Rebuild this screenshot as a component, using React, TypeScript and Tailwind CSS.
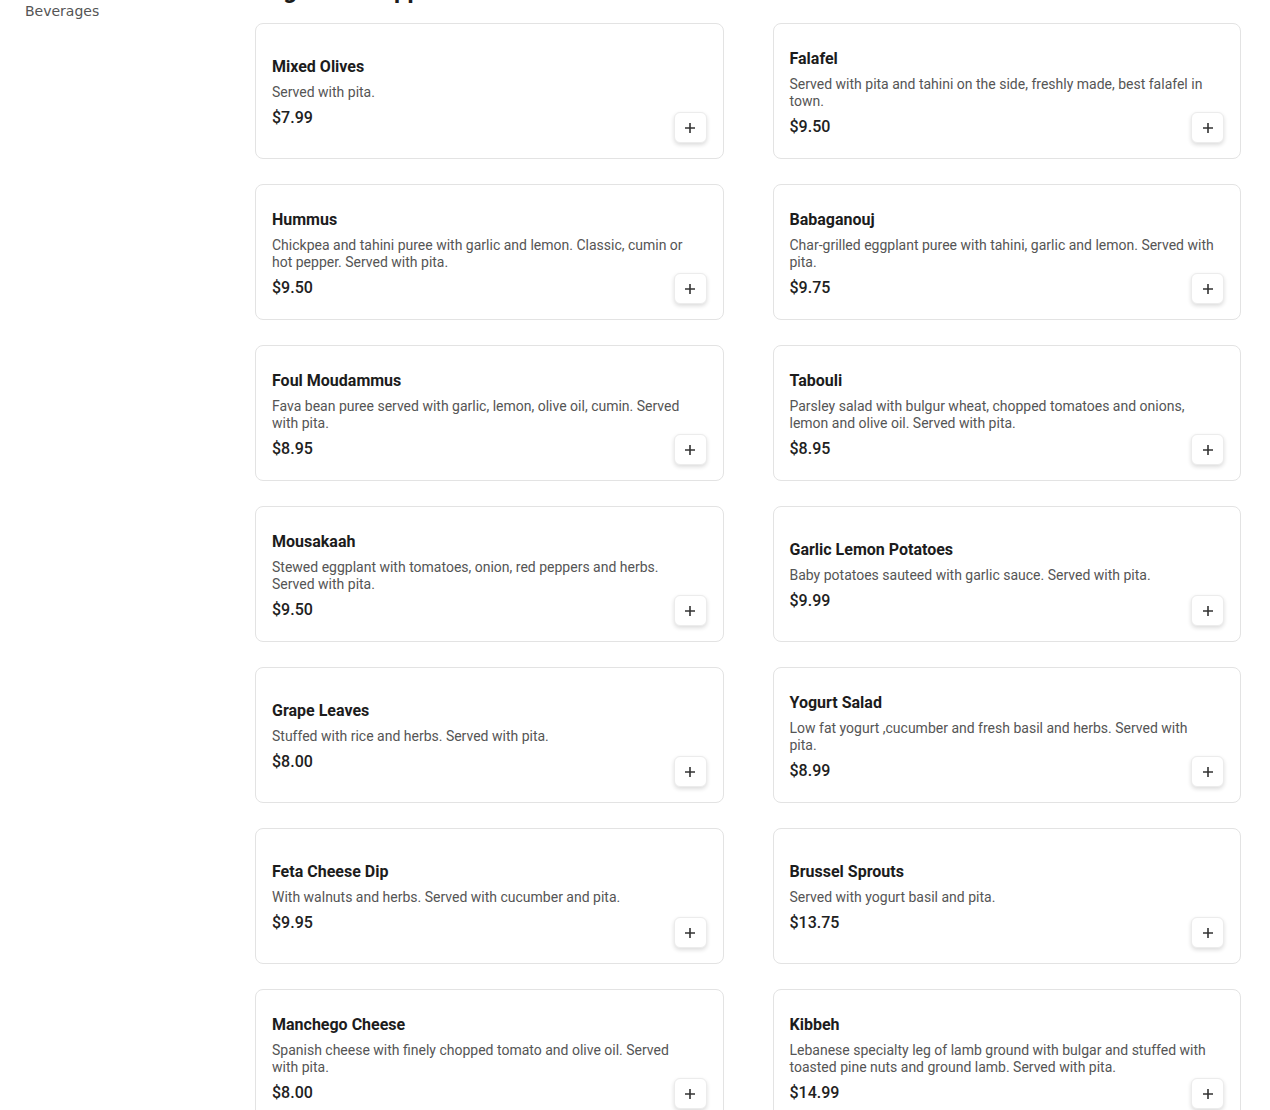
import React from 'react';

interface MenuItem {
  name: string;
  description: string;
  price: string;
}

const categories = ['Appetizers', 'Salads', 'Entrees', 'Sandwiches', 'Desserts', 'Beverages'];

const items: MenuItem[] = [
  { name: 'Mixed Olives', description: 'Served with pita.', price: '$7.99' },
  { name: 'Falafel', description: 'Served with pita and tahini on the side, freshly made, best falafel in town.', price: '$9.50' },
  { name: 'Hummus', description: 'Chickpea and tahini puree with garlic and lemon. Classic, cumin or hot pepper. Served with pita.', price: '$9.50' },
  { name: 'Babaganouj', description: 'Char-grilled eggplant puree with tahini, garlic and lemon. Served with pita.', price: '$9.75' },
  { name: 'Foul Moudammus', description: 'Fava bean puree served with garlic, lemon, olive oil, cumin. Served with pita.', price: '$8.95' },
  { name: 'Tabouli', description: 'Parsley salad with bulgur wheat, chopped tomatoes and onions, lemon and olive oil. Served with pita.', price: '$8.95' },
  { name: 'Mousakaah', description: 'Stewed eggplant with tomatoes, onion, red peppers and herbs. Served with pita.', price: '$9.50' },
  { name: 'Garlic Lemon Potatoes', description: 'Baby potatoes sauteed with garlic sauce. Served with pita.', price: '$9.99' },
  { name: 'Grape Leaves', description: 'Stuffed with rice and herbs. Served with pita.', price: '$8.00' },
  { name: 'Yogurt Salad', description: 'Low fat yogurt ,cucumber and fresh basil and herbs. Served with pita.', price: '$8.99' },
  { name: 'Feta Cheese Dip', description: 'With walnuts and herbs. Served with cucumber and pita.', price: '$9.95' },
  { name: 'Brussel Sprouts', description: 'Served with yogurt basil and pita.', price: '$13.75' },
  { name: 'Manchego Cheese', description: 'Spanish cheese with finely chopped tomato and olive oil. Served with pita.', price: '$8.00' },
  { name: 'Kibbeh', description: 'Lebanese specialty leg of lamb ground with bulgar and stuffed with toasted pine nuts and ground lamb. Served with pita.', price: '$14.99' },
];

const MenuCard: React.FC<{ item: MenuItem }> = ({ item }) => (
  <div className="relative h-[136px] bg-white border border-[#e3e3e3] rounded-lg pl-4 pr-[25px] flex items-center">
    <div className="w-full pt-[2px]">
      <h3 className="text-base font-bold leading-[19px] text-[#1c1c1c]">{item.name}</h3>
      <p className="mt-2 text-sm leading-[17px] text-[#555555]">{item.description}</p>
      <p className="mt-[7px] text-base font-medium leading-[19px] text-[#212121]">{item.price}</p>
    </div>
    {/* add-to-cart button sits over the card's bottom right corner */}
    <button className="absolute right-4 bottom-[15px] w-[33px] h-[31px] rounded-md bg-white border border-[#ececec] shadow-[0_2px_4px_rgba(0,0,0,0.14)] flex items-center justify-center text-[#333]">
      <svg className="w-3 h-3" viewBox="0 0 12 12" fill="none" stroke="currentColor" strokeWidth="1.6">
        <path d="M6 1v10M1 6h10" />
      </svg>
    </button>
  </div>
);

export default function App() {
  return (
    <div className="bg-white min-h-screen overflow-hidden font-['Roboto',sans-serif]">
      {/* page is shown scrolled down a little */}
      <div className="flex pl-[25px] pr-[29px] -mt-[139px]">
        <aside className="w-[230px] shrink-0">
          <nav className="flex flex-col gap-2 font-['DejaVu_Sans',sans-serif]">
            {categories.map((c) => (
              <a key={c} className="text-sm leading-5 text-[#555555]">
                {c}
              </a>
            ))}
          </nav>
        </aside>

        <main className="flex-1 pt-[113px]">
          <h2 className="text-2xl font-bold leading-8 text-[#1c1c1c] mb-[17px]">Vegetarian Appetizers</h2>
          <div className="grid grid-cols-2 gap-x-[49px] gap-y-[25px] pb-10">
            {items.map((item) => (
              <MenuCard key={item.name} item={item} />
            ))}
          </div>
        </main>
      </div>
    </div>
  );
}
